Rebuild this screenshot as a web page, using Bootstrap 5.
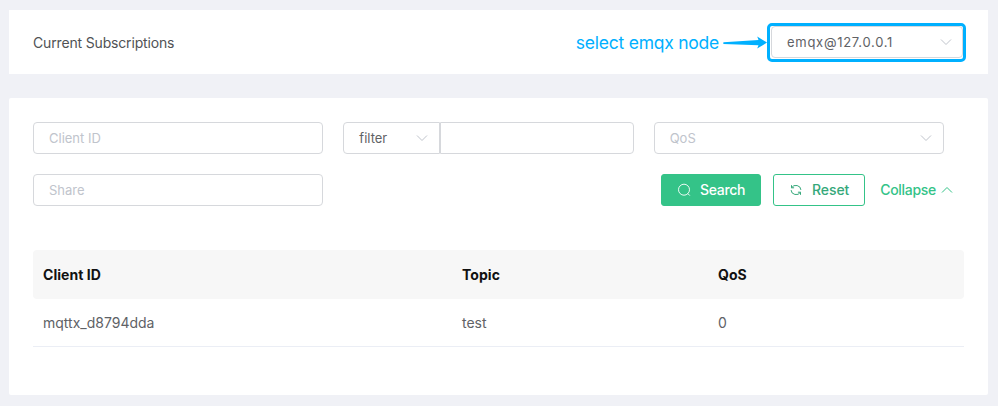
<!DOCTYPE html>
<html lang="en">
<head>
<meta charset="utf-8">
<meta name="viewport" content="width=device-width, initial-scale=1">
<title>Subscriptions</title>
<link href="https://cdn.jsdelivr.net/npm/bootstrap@5.3.0/dist/css/bootstrap.min.css" rel="stylesheet">
<style>
body{background:#f0f1f6;font-family:Inter,"Liberation Sans",sans-serif;font-size:14px;line-height:20px;color:#505255;padding:10px 10px 0 9px;overflow:hidden}
.panel{background:#fff;padding:0 24px}
.head-panel{height:64px;margin-bottom:24px}
.main-panel{height:297px;padding-top:24px;border-radius:2px}
.page-title{letter-spacing:-.16px;padding-top:1px}
.hint{color:#00b0ff;font-size:17.5px;line-height:24px;letter-spacing:-.24px;margin-right:3px;padding-top:2px}
.node-frame{border:3px solid #00b0ff;border-radius:5px;width:199px;height:39px;padding:0 0 0 1px;margin-right:-2px}
.field{height:32px;border:1px solid #d6d8dc;border-radius:4px;background:#fff;font-size:13px;padding:0 15px;color:#606266;box-shadow:none}
.field::placeholder{color:#c0c4cc;opacity:1}
.hollow{color:#c0c4cc}
.field.pick{padding-right:11px}
.field.node-field{width:192px;letter-spacing:.72px;padding-right:10px}
.filters{--bs-gutter-x:0;row-gap:20px}
.filters>.col{padding-right:20px}
.filter-pick{width:97px;flex:none;border-radius:4px 0 0 4px}
.filter-text{border-radius:0 4px 4px 0;min-width:0}
.chev{width:12px;height:8px;flex:none;fill:none;stroke:#c0c4cc;stroke-width:1}
.btn.tool{height:32px;border-radius:3px;font-size:14px;font-weight:500;line-height:20px;padding:0 15px;letter-spacing:-.1px}
.tool svg{width:14px;height:14px;fill:none;stroke:currentColor;flex:none}
.btn.go{background:#34c388;border-color:#34c388;color:#fff;width:100px;letter-spacing:-.3px}
.btn.again{background:#fff;border-color:#34c388;color:#35a87a;width:92px}
.actions{padding-right:11px;gap:12px}
.fold{color:#34c388;font-weight:500;letter-spacing:-.3px;gap:5px;margin-left:3px}
.fold .chev{stroke:#34c388}
.subs{margin:44px 0 0;table-layout:fixed;font-size:14px;line-height:20px}
.subs th,.subs td{border:0;padding:0 10px;vertical-align:middle;box-shadow:none}
.subs th{height:49px;background:#f7f7f7;color:#111;font-weight:700;letter-spacing:.05px}
.subs th:first-child{border-radius:4px 0 0 4px}
.subs th:last-child{border-radius:0 4px 4px 0}
.subs td{height:47px;padding-top:1px;border-bottom:1px solid #ebeef5;color:#606266}
.c1{width:419px}.c2{width:256px}
</style>
</head>
<body>
<header class="panel head-panel d-flex align-items-center">
  <div class="page-title me-auto">Current Subscriptions</div>
  <div class="hint">select emqx node</div>
  <svg width="45" height="14" viewBox="0 0 45 14"><path d="M1.5 7.2Q1 8 1.5 8.9L36.5 10.2L35.2 13.6L45 7.6L35.2 1.4L36.5 5Z" fill="#00b0ff"/></svg>
  <div class="node-frame">
    <div class="field pick node-field d-flex align-items-center justify-content-between">emqx@127.0.0.1
      <svg class="chev" viewBox="0 0 12 8"><path d="M1 1.5L6 6.5L11 1.5"/></svg>
    </div>
  </div>
</header>
<main class="panel main-panel">
  <div class="row row-cols-3 filters">
    <div class="col"><input class="form-control field" placeholder="Client ID"></div>
    <div class="col d-flex">
      <div class="field pick filter-pick d-flex align-items-center justify-content-between">filter
        <svg class="chev" viewBox="0 0 12 8"><path d="M1 1.5L6 6.5L11 1.5"/></svg>
      </div>
      <input class="form-control field filter-text" aria-label="filter value">
    </div>
    <div class="col">
      <div class="field pick hollow d-flex align-items-center justify-content-between">QoS
        <svg class="chev" viewBox="0 0 12 8"><path d="M1 1.5L6 6.5L11 1.5"/></svg>
      </div>
    </div>
    <div class="col"><input class="form-control field" placeholder="Share"></div>
    <div class="col-8 d-flex align-items-center justify-content-end actions">
      <button class="btn tool go d-flex align-items-center justify-content-between" type="button">
        <svg viewBox="0 0 14 14"><circle cx="7" cy="6.7" r="5.5" stroke-width=".9"/><path d="M10.8 10.5L12.8 12.6" stroke-width=".9"/></svg>Search</button>
      <button class="btn tool again d-flex align-items-center justify-content-between" type="button">
        <svg viewBox="0 0 14 14"><path d="M2.5 2.2V4.8H5.1M2.6 4.7A5 4.7 0 0 1 11.9 6.9M11.5 11.8V9.2H8.9M11.4 9.3A5 4.7 0 0 1 2.1 7.1"/></svg>Reset</button>
      <div class="fold d-flex align-items-center">Collapse
        <svg class="chev" viewBox="0 0 12 8"><path d="M1 6.5L6 1.5L11 6.5"/></svg>
      </div>
    </div>
  </div>
  <table class="table subs">
    <colgroup><col class="c1"><col class="c2"><col></colgroup>
    <thead><tr><th>Client ID</th><th>Topic</th><th>QoS</th></tr></thead>
    <tbody><tr><td>mqttx_d8794dda</td><td>test</td><td>0</td></tr></tbody>
  </table>
</main>
<script src="https://cdn.jsdelivr.net/npm/bootstrap@5.3.0/dist/js/bootstrap.bundle.min.js"></script>
</body>
</html>
